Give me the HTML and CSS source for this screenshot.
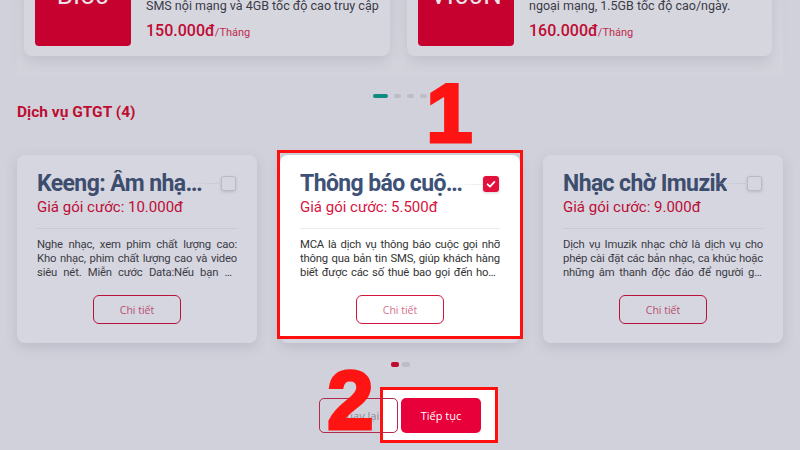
FILE: index.html
```html
<!DOCTYPE html>
<html lang="vi">
<head>
<meta charset="utf-8">
<title>Dịch vụ GTGT</title>
<link rel="stylesheet" href="styles.css">
</head>
<body>
<div class="page">
  <section class="top-panel">
    <div class="plans">
      <div class="plan">
        <div class="plan-img"><span>BI50</span></div>
        <div class="plan-info">
          <p class="plan-desc">SMS nội mạng và 4GB tốc độ cao truy cập</p>
          <p class="plan-price">150.000đ<small>/Tháng</small></p>
        </div>
      </div>
      <div class="plan">
        <div class="plan-img"><span>VI60N</span></div>
        <div class="plan-info">
          <p class="plan-desc">ngoại mạng, 1.5GB tốc độ cao/ngày.</p>
          <p class="plan-price">160.000đ<small>/Tháng</small></p>
        </div>
      </div>
    </div>
  </section>

  <div class="dots top-dots">
    <span class="dot active"></span><span class="dot"></span><span class="dot"></span><span class="dot"></span>
  </div>

  <h2 class="section-title">Dịch vụ GTGT (4)</h2>

  <div class="services">
    <div class="service">
      <div class="service-head">
        <h3 class="service-name">Keeng: Âm nhạc &amp; Video</h3>
        <span class="check"></span>
      </div>
      <p class="service-price">Giá gói cước: 10.000đ</p>
      <p class="service-desc">Nghe nhạc, xem phim chất lượng cao: Kho nhạc, phim chất lượng cao và video siêu nét. Miễn cước Data:Nếu bạn đã đăng ký gói cước</p>
      <button class="detail-btn">Chi tiết</button>
    </div>
    <div class="service selected">
      <div class="service-head">
        <h3 class="service-name">Thông báo cuộc gọi nhỡ</h3>
        <span class="check checked"><svg viewBox="0 0 16 16" width="16" height="16"><path d="M4.6 8.3 L7 10.6 L11.4 5.9" fill="none" stroke="#fff" stroke-width="1.8" stroke-linecap="round" stroke-linejoin="round"/></svg></span>
      </div>
      <p class="service-price">Giá gói cước: 5.500đ</p>
      <p class="service-desc">MCA là dịch vụ thông báo cuộc gọi nhỡ thông qua bản tin SMS, giúp khách hàng biết được các số thuê bao gọi đến hoặc nhắn tin</p>
      <button class="detail-btn">Chi tiết</button>
    </div>
    <div class="service">
      <div class="service-head">
        <h3 class="service-name">Nhạc chờ Imuzik</h3>
        <span class="check"></span>
      </div>
      <p class="service-price">Giá gói cước: 9.000đ</p>
      <p class="service-desc">Dịch vụ Imuzik nhạc chờ là dịch vụ cho phép cài đặt các bản nhạc, ca khúc hoặc những âm thanh độc đáo để người gọi đến nghe</p>
      <button class="detail-btn">Chi tiết</button>
    </div>
  </div>

  <div class="dots bottom-dots">
    <span class="dot active"></span><span class="dot"></span>
  </div>

  <div class="actions">
    <button class="btn-back">Quay lại</button>
    <button class="btn-next">Tiếp tục</button>
  </div>

  <div class="highlight-next"></div>
  <span class="marker marker-1">1</span>
  <span class="marker marker-2">2</span>
</div>
</body>
</html>
```

FILE: styles.css
```css
* { box-sizing: border-box; }
html, body { margin: 0; padding: 0; }
body {
  width: 800px;
  height: 450px;
  overflow: hidden;
  background: #d1d1db;
  font-family: Roboto, "Noto Sans", "Liberation Sans", sans-serif;
}
.page {
  position: relative;
  width: 800px;
  height: 450px;
  overflow: hidden;
}
p, h2, h3 { margin: 0; }

/* top plans */
.top-panel {
  margin: 0 17px;
  height: 76px;
  padding: 0 11px 0 7px;
  background: linear-gradient(#d4d4dd, #d6d6df 70%, #d3d3dc);
}
.plans {
  display: grid;
  grid-template-columns: 366px 365px;
  gap: 17px;
}
.plan {
  margin-top: -54px;
  height: 110px;
  display: flex;
  gap: 15px;
  padding: 11px 11px 10px;
  background: #d6d6df;
  border-radius: 8px;
  box-shadow: 0 6px 14px rgba(130, 130, 150, 0.25);
}
.plan-img {
  width: 96px;
  flex: none;
  background: #c6002f;
  border-radius: 4px;
  display: flex;
  justify-content: center;
  color: #e9e2e6;
  font-size: 26px;
  line-height: 30px;
  padding-top: 23px;
}
.plan-info {
  display: flex;
  flex-direction: column;
  justify-content: flex-end;
  padding-bottom: 4px;
}
.plan-desc {
  white-space: nowrap;
  font-size: 12.5px;
  line-height: 16px;
  color: #3b3b47;
}
.plan-price {
  margin-top: 8px;
  font-size: 16px;
  font-weight: 500;
  color: #bf0b33;
  line-height: 18px;
}
.plan-price small {
  font-size: 11px;
  font-weight: 400;
  color: #bf2a4f;
}

/* dots */
.dots {
  display: flex;
  justify-content: center;
  gap: 6px;
}
.top-dots {
  margin-top: 18px;
}
.top-dots .dot {
  width: 7px;
  height: 4px;
  border-radius: 2px;
  background: #bdbdc7;
}
.top-dots .dot.active {
  width: 15px;
  background: #0f8b80;
}
.bottom-dots {
  margin-top: 19px;
  gap: 3px;
}
.bottom-dots .dot {
  width: 8px;
  height: 5px;
  border-radius: 2px;
  background: #bdbdc7;
}
.bottom-dots .dot.active { background: #c00a30; }

.section-title {
  margin: 4px 0 0 17px;
  font-size: 15.5px;
  font-weight: 700;
  line-height: 20px;
  color: #bd0d31;
}

/* services */
.services {
  margin: 33px 17px 0;
  display: grid;
  grid-template-columns: 240px 240px 240px;
  justify-content: space-between;
}
.service {
  position: relative;
  height: 188px;
  padding: 15px 20px 0;
  background: #d6d6e0;
  border-radius: 8px;
  box-shadow: 0 4px 12px rgba(140, 140, 160, 0.3);
  display: flex;
  flex-direction: column;
}
.service.selected {
  background: linear-gradient(#fff calc(100% - 5px), #d6d6e0 calc(100% - 5px));
}
.service.selected::after {
  content: "";
  position: absolute;
  left: -3px;
  right: -3px;
  top: -5px;
  bottom: 4px;
  border: 3px solid #ff1010;
  pointer-events: none;
}
.service-head {
  display: flex;
  justify-content: space-between;
  align-items: flex-start;
}
.service-name {
  max-width: 166px;
  white-space: nowrap;
  overflow: hidden;
  text-overflow: ellipsis;
  font-size: 23px;
  letter-spacing: -0.6px;
  font-weight: 700;
  line-height: 28px;
  color: #3d4d6e;
}
.selected .service-name { color: #3e5177; }
.check {
  position: relative;
  width: 15px;
  height: 15px;
  margin-top: 6px;
  margin-right: 1px;
  border: 1.5px solid #b9b9c5;
  border-radius: 3px;
  background: #d6d6e0;
  box-shadow: 0 1px 3px rgba(120, 120, 140, 0.3);
}
.check::before {
  content: "";
  position: absolute;
  right: 100%;
  top: 6px;
  width: 36px;
  height: 1px;
  background: linear-gradient(to right, rgba(200,200,210,0), #c8c8d2);
}
.check.checked {
  width: 16px;
  height: 16px;
  border: none;
  background: #e2103c;
  display: flex;
  align-items: center;
  justify-content: center;
}
.check.checked::before {
  top: 8px;
  background: linear-gradient(to right, rgba(240,240,244,0), #ececf0);
}
.service-price {
  font-size: 15px;
  line-height: 18px;
  color: #bb0e35;
}
.selected .service-price { color: #d81541; }
.service-desc {
  margin-top: 12px;
  padding-top: 9px;
  border-top: 1px solid #c9c9d3;
  font-size: 11.3px;
  letter-spacing: -0.2px;
  line-height: 14px;
  color: #3b3b45;
  text-align: justify;
  display: -webkit-box;
  -webkit-line-clamp: 3;
  -webkit-box-orient: vertical;
  overflow: hidden;
}
.selected .service-desc { border-top-color: #ececf0; color: #333; }
.detail-btn {
  align-self: center;
  margin-top: 15px;
  width: 88px;
  height: 29px;
  border: 1.5px solid #b8123b;
  border-radius: 6px;
  background: transparent;
  font-family: "Open Sans", Lato, sans-serif;
  font-size: 10.5px;
  color: #b84d6c;
}
.selected .detail-btn { border-color: #d0163f; color: #d96e89; background: #fff; }

/* actions */
.actions {
  position: relative;
  z-index: 2;
  margin-top: 31px;
  display: flex;
  justify-content: center;
  gap: 3px;
}
.actions button {
  width: 80px;
  height: 35px;
  border-radius: 5px;
  font-family: "Open Sans", Lato, sans-serif;
  font-size: 11px;
}
.btn-back {
  width: 79px !important;
  background: transparent;
  border: 1.5px solid #b3284c;
  color: #8a8a96;
}
.btn-next {
  border: none;
  background: #e8003a;
  color: #fff;
}
.highlight-next {
  position: absolute;
  z-index: 1;
  left: 380px;
  top: 387px;
  width: 118px;
  height: 56px;
  background: #fff;
  border: 3px solid #ff1010;
}

/* annotation markers */
.marker {
  position: absolute;
  z-index: 3;
  font-family: "Liberation Sans", Arial, sans-serif;
  font-weight: 700;
  color: #ff1414;
  -webkit-text-stroke: 3px #ff1414;
  line-height: 1;
}
.marker-1 {
  left: 426px;
  top: 71px;
  font-size: 84px;
}
.marker-2 {
  left: 327px;
  top: 358px;
  font-size: 84px;
}
```
